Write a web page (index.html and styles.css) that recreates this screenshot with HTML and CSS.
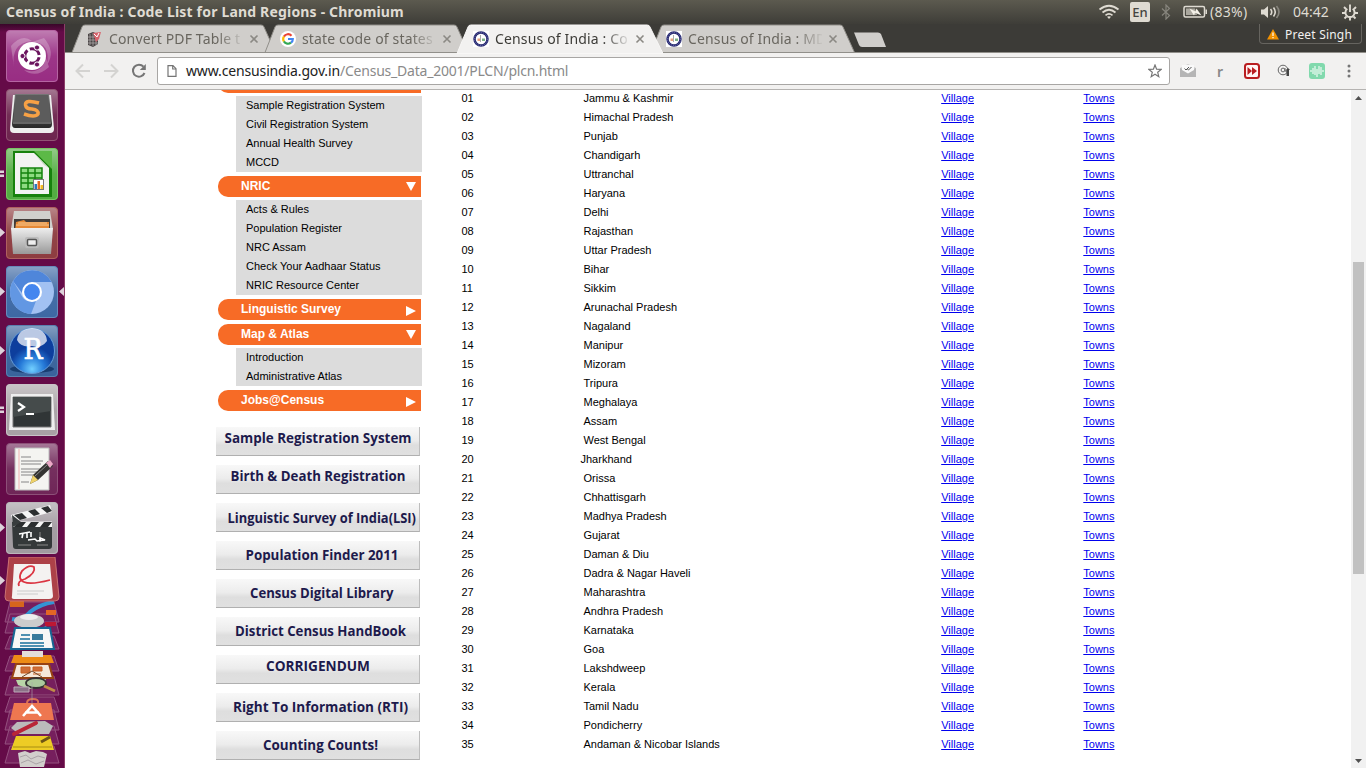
FILE: index.html
```html
<!DOCTYPE html>
<html lang="en">
<head>
<meta charset="utf-8">
<title>Census of India : Code List for Land Regions</title>
<link rel="stylesheet" href="styles.css">
</head>
<body>
<header class="panel">
  <span class="panel-title">Census of India : Code List for Land Regions - Chromium</span>
  <div class="indicators">
    <svg class="ind-wifi" width="22" height="18" viewBox="0 0 22 18" fill="none" stroke="#dfdbd2" stroke-width="1.7"><path d="M1.5 6.5Q11 -1 20.500 6.500M4.500 9.500Q11 4 17.500 9.500M7.500 12.300Q11 9.500 14.500 12.300"/><path d="M9 13.800L11 16L13 13.800Q11 12.600 9 13.800Z" fill="#dfdbd2" stroke="none"/></svg>
    <span class="ind-lang">En</span>
    <svg class="ind-bt" width="10" height="16" viewBox="0 0 10 16" fill="none" stroke="#87857d" stroke-width="1.2"><path d="M1 4.500L8.500 11.500L5 15V1L8.500 4.500L1 11.500"/></svg>
    <svg class="ind-bat" width="25" height="14" viewBox="0 0 25 14"><rect x="1" y="1.500" width="20.500" height="10.500" rx="1.500" fill="none" stroke="#dfdbd2" stroke-width="1.500"/><path d="M3 3.500H12L14 10H3Z" fill="#aaa79e"/><path d="M6.500 3.500L12.500 6.500L13.500 3.500L18.500 10.500L12 7.800L11 10.500Z" fill="#f4f1e8"/><path d="M22.500 4.500H24V9H22.500Z" fill="#dfdbd2"/></svg>
    <span class="ind-pct">(83%)</span>
    <svg class="ind-vol" width="22" height="16" viewBox="0 0 22 16"><path d="M1 5.500H4L8 2V14L4 10.500H1Z" fill="#dfdbd2"/><path d="M10.500 5Q13 8 10.500 11M13.500 3.500Q17 8 13.500 12.500" fill="none" stroke="#dfdbd2" stroke-width="1.600"/><path d="M16.500 2Q21.500 8 16.500 14" fill="none" stroke="#88867e" stroke-width="1.600"/></svg>
    <span class="ind-clock">04:42</span>
    <svg class="ind-gear" width="16" height="17" viewBox="0 0 16 17" fill="none" stroke="#dfdbd2"><path d="M5.300 4.800A4.600 4.600 0 1 0 10.700 4.800" stroke-width="2"/><path d="M8 .5V8M2 3L4 5M14 3L12 5M0 9H3M13 9H16M2.500 14.500L4.500 12.500M13.500 14.500L11.500 12.500M8 13.500V16.500" stroke-width="1.900"/></svg>
  </div>
</header>
<div class="desktop">
  <nav class="launcher">
    <svg class="tile" viewBox="0 0 52 52"><defs><linearGradient id="gloss" x2="0" y2="1"><stop stop-color="#fff" stop-opacity=".42"/><stop offset=".5" stop-color="#fff" stop-opacity=".1"/><stop offset="1" stop-color="#fff" stop-opacity=".06"/></linearGradient><linearGradient id="metal" x2="0" y2="1"><stop stop-color="#eee"/><stop offset="1" stop-color="#999"/></linearGradient><linearGradient id="dark" x2="0" y2="1"><stop stop-color="#767676"/><stop offset="1" stop-color="#292929"/></linearGradient><radialGradient id="blue" cy=".9"><stop stop-color="#72d0ff"/><stop offset=".55" stop-color="#267ad8"/><stop offset="1" stop-color="#0d3e9d"/></radialGradient></defs>
      <rect width="52" height="52" rx="4" fill="#92207b"/><rect x=".5" y=".5" width="51" height="51" rx="3.500" fill="url(#gloss)" stroke="#b565a2"/><path d="M8 38Q4 13 26 11Q16 3 5 16M26 12Q45 12 41 35Q50 22 38 8M40 28Q36 45 18 40Q30 49 43 37" fill="#fff" opacity=".24"/><circle cx="26" cy="26" r="14" fill="#fff"/><g fill="none" stroke="#6b145e" stroke-width="3"><circle cx="26" cy="26" r="7.200" stroke-dasharray="12.500 2.580" stroke-dashoffset="-1.300"/></g><g fill="#6b145e" stroke="#fff"><circle cx="16.500" cy="26" r="2.600"/><circle cx="31" cy="17.500" r="2.600"/><circle cx="31" cy="34.500" r="2.600"/></g></svg>
    <svg class="tile" viewBox="0 0 52 52"><rect width="52" height="52" rx="4" fill="#641743"/><rect x=".5" y=".5" width="51" height="51" rx="3.500" fill="url(#gloss)" stroke="#925475"/><path d="M7 6H45L48 40Q48 44 44 44H8Q4 44 4 40Z" fill="#eee"/><path d="M9 5H43L46 35Q46 39 43 39H9Q6 39 6 35Z" fill="url(#dark)"/><path d="M10 6H42L45 33H7Z" fill="#5c5c5c"/><path d="M7 34H45" stroke="#999"/><path d="M33 14Q19 10 19.500 16Q20 20 26 20Q33 21 32 25Q29 29 18 25" fill="none" stroke="#f7a145" stroke-width="3.500"/></svg>
    <svg class="tile" viewBox="0 0 52 52"><rect width="52" height="52" rx="4" fill="#47a735"/><rect x=".5" y=".5" width="51" height="51" rx="3.500" fill="url(#gloss)" stroke="#79c564"/><path d="M7 3H37L46 13V49H7Z" fill="#17810d"/><path d="M28 3H46V21Z" fill="#5cb947"/><path d="M9 5H28L43 20V46H9Z" fill="#f2f3f2"/><path d="M28 5L43 20L38 17Z" fill="#c6d5c2"/><path d="M15 20H36V41H15Z" fill="#8edb82"/><path d="M15 20H36V41H15ZM15 25H36M15 30H36M15 35H36M22 20V41M29 20V41" fill="none" stroke="#13830d" stroke-width="1.500"/><rect x="27.500" y="31.500" width="10" height="10" fill="#fff" stroke="#777"/><path d="M28.500 36H31V41H28.500Z" fill="#2b79bd"/><path d="M31.500 33H34V41H31.500Z" fill="#e46b22"/><path d="M34.500 37H37V41H34.500Z" fill="#f4bd24"/></svg>
    <svg class="tile" viewBox="0 0 52 52"><rect width="52" height="52" rx="4" fill="#863034"/><rect x=".5" y=".5" width="51" height="51" rx="3.500" fill="url(#gloss)" stroke="#b0605f"/><path d="M8 4H44L47 22H5Z" fill="#d0d0cd"/><path d="M8 12H44V24H8Z" fill="#413c3a"/><path d="M10 15L18 13L20 15H43V24H9Z" fill="#e58835"/><path d="M10 18H43M12 16H41" stroke="#f7cb95"/><path d="M5 21H47L45 47H7Z" fill="url(#metal)"/><rect x="19" y="30" width="14" height="11" rx="2" fill="#bbb"/><rect x="21.500" y="32.500" width="9" height="6" rx="1" fill="#eee" stroke="#555" stroke-width="1.500"/></svg>
    <svg class="tile" viewBox="0 0 52 52"><rect width="52" height="52" rx="4" fill="#315f9e"/><rect x=".5" y=".5" width="51" height="51" rx="3.500" fill="url(#gloss)" stroke="#688bbb"/><circle cx="26" cy="26" r="22" fill="#a2c1f2"/><path d="M7 15A22 22 0 0 1 45.500 16H26L16 27Z" fill="#4f86da"/><path d="M7 15L17 32Q21 37 30 35L25 48A22 22 0 0 1 7 15" fill="#6297e3"/><circle cx="26" cy="26" r="10" fill="#fff"/><circle cx="26" cy="26" r="7.900" fill="#4486ef"/></svg>
    <svg class="tile" viewBox="0 0 52 52"><rect width="52" height="52" rx="4" fill="#2c5995"/><rect x=".5" y=".5" width="51" height="51" rx="3.500" fill="url(#gloss)" stroke="#5a81b0"/><ellipse cx="26" cy="44" rx="22" ry="4" fill="#193d70"/><circle cx="26" cy="26" r="22.500" fill="url(#blue)" stroke="#639bd8"/><path d="M11 15Q12 4 26 3Q40 4 41 16Q35 24 26 21Q15 23 11 15" fill="#fff" opacity=".72"/><text x="17.500" y="34" class="r-letter" textLength="19" lengthAdjust="spacingAndGlyphs">R</text></svg>
    <svg class="tile" viewBox="0 0 52 52"><rect width="52" height="52" rx="4" fill="#a29b9f"/><rect x=".5" y=".5" width="51" height="51" rx="3.500" fill="url(#gloss)" stroke="#c9c3c7"/><path d="M5 10H47L49 46H3Z" fill="#eee"/><path d="M7 13H45V43H7Z" fill="#303536" stroke="#777"/><path d="M7 13H45V27L7 33Z" fill="#454b4b"/><path d="M12 19L18 23L12 27M20 30H28" fill="none" stroke="#fff" stroke-width="2.200"/></svg>
    <svg class="tile" viewBox="0 0 52 52"><rect width="52" height="52" rx="4" fill="#66184d"/><rect x=".5" y=".5" width="51" height="51" rx="3.500" fill="url(#gloss)" stroke="#8d5078"/><path d="M9 5H43V47H9Z" fill="#f4f4f1" stroke="#bbb"/><path d="M15 14H25M15 18H37M15 21H35M15 26H37M15 29H34M15 32H28M15 39H23" stroke="#aaa" stroke-width="1.500"/><path d="M13 6V46" stroke="#f0b3b1"/><path d="M24 41L27 32L42 18L47 23L32 37Z" fill="#343432"/><path d="M24 41L27 32L32 37Z" fill="#efd269"/><path d="M40 20L44 17L47 21L44 25Z" fill="#eba9c7"/><path d="M29 33L42 21" stroke="#888"/></svg>
    <svg class="tile" viewBox="0 0 52 52"><rect width="52" height="52" rx="4" fill="#9b949a"/><rect x=".5" y=".5" width="51" height="51" rx="3.500" fill="url(#gloss)" stroke="#bdb6bb"/><path d="M6 20H46V44Q46 47 43 47H10Q7 47 7 44Z" fill="#343839"/><path d="M5 13L44 3L46 10L7 20Z" fill="#f5f5f5"/><path d="M7 19.500H46V25H7Z" fill="#f5f5f5"/><path d="M8 13L16 11L21 16L14 18ZM22 9L29 7L34 12L28 14ZM35 6L42 4L46 9L41 11ZM12 20H20L16 25H8ZM25 20H33L29 25H21ZM38 20H46L42 25H34Z" fill="#2c2f30"/><path d="M6 13L15 20L7 25Z" fill="#383c3d"/><path d="M12 43H25M31 43H42M34 30V40" stroke="#888"/><path d="M13 32L24 30M17 31L16 36M21 31V36M25 30V35M22 38L29 37L31 39L39 38L34 36V40" fill="none" stroke="#fff" stroke-width="1.600"/></svg>
    <svg class="stack" viewBox="0 0 65 211">
      <g transform="translate(0 -5)">
      <g fill="#8b3777" fill-opacity=".45" stroke="#94507f"><path d="M10 50H54L59 70H5ZM10 62H54L59 81H5ZM10 84H54L59 97H5ZM10 104H54L59 119H5ZM10 124H54L59 143H5ZM10 145H54L59 160H5ZM10 158H54L59 178H5ZM10 174H54L59 192H5ZM10 194H54L59 211H5Z"/></g>
      <path d="M12 67Q22 69 30 60Q40 52 54 50" fill="none" stroke="#3494d3" stroke-width="4"/><path d="M10 49H24V55H10Z" fill="#d6651c"/><path d="M46 58H56V63H46Z" fill="#e46624"/><path d="M45 70H56V74H45Z" fill="#bd1834"/><ellipse cx="29" cy="69" rx="15" ry="7" fill="#ccc"/><ellipse cx="29" cy="65" rx="9" ry="3" fill="#eee"/><path d="M35 78L46 74L49 79Z" fill="#4882ae"/>
      <path d="M15 76H50L54 97H11Z" fill="#f7f7f6" stroke="#176693" stroke-width="2"/><path d="M21 83H30M20 87H30M20 91H44M20 94H44" stroke="#17709c" stroke-width="1.500"/><path d="M32 82H43V88H32Z" fill="#397b9c"/>
      <path d="M14 103H51L54 111H11Z" fill="#ed8b16"/><path d="M22 99H43V105H22Z" fill="#e3dfd9"/><path d="M16 112H49L53 126H12Z" fill="#f5e8da" stroke="#984212" stroke-width="2"/><path d="M21 115H30V121H21ZM33 115H42V119H33ZM33 122H41" fill="#cf6d37" stroke="#c86023"/><path d="M22 125L32 119L42 125" fill="none" stroke="#70482e"/>
      <path d="M16 128L46 127L44 134L29 137L18 133Z" fill="#b9d6a8"/><ellipse cx="36" cy="131" rx="10" ry="5" fill="#a7c59a" fill-opacity=".8" stroke="#333" stroke-width="1.800"/><path d="M44 134L55 139" stroke="#c08c48" stroke-width="3"/><path d="M14 135H29V140H14Z" fill="#8c7288" stroke="#bba9b7"/>
      <path d="M14 151H51L54 168H10Z" fill="#ee7750"/><path d="M27 151Q27 147 33 147Q39 147 38 151" fill="none" stroke="#d87054" stroke-width="2"/><path d="M23 164L32 154L41 164M25 160.500H39" fill="none" stroke="#fff" stroke-width="2.600"/><path d="M32 130V152" stroke="#aaa" opacity=".6"/>
      <path d="M17 170L45 169L53 174L49 182H19L11 176Z" fill="#bbb"/><path d="M14 182L36 171" stroke="#b92638" stroke-width="4" stroke-linecap="round"/><path d="M16 184H50L54 198H11Z" fill="#edcc25"/><path d="M13 195H52" stroke="#a88e12"/><path d="M41 190L50 185" stroke="#6d5515" stroke-width="3"/><path d="M18 201L25 199L30 201L36 199L43 200L47 202L44 215H20Z" fill="#d2cfcc"/><path d="M20 205L26 203L31 207L38 204L45 206M21 211L28 208L36 212L44 209" fill="none" stroke="#aaa3a7"/>
      </g>
      <path d="M9 0H55L59 40Q59 44 55 44H9Q5 44 5 40Z" fill="#ad4148" stroke="#cb7374"/><path d="M14 3H50L53 35Q53 38 49 38H14Q11 38 12 35Z" fill="#f4f2f1" transform="translate(0 4)"/><path d="M17 34H44M17 37H38" stroke="#ccc"/><path d="M19 29Q17 24 25 22Q36 16 34 10Q29 7 22 14Q17 22 24 25Q31 28 50 23" fill="none" stroke="#db3542" stroke-width="1.800"/>
    </svg>
    <svg class="markers" width="65" height="744" viewBox="0 24 65 744" fill="#ddd2da"><path d="M0 170.500H4V173H0ZM0 174.500H4V177H0ZM0 406.500H4V409H0ZM0 410.500H4V413H0ZM0 228L5 232.500L0 237ZM0 287L5 291.500L0 296ZM0 346L5 350.500L0 355ZM0 523L5 527.500L0 532ZM0 576L5 580.500L0 585ZM64 287L59 291.500L64 296Z"/></svg>
  </nav>
  <main class="browser">
    <div class="tabstrip">
      <div class="tab"><svg class="tab-shape" width="206" height="29"><path d="M0 28.500L10 3Q10.500 1 13 1H189Q191.500 1 192 3L203.500 28.500Z" fill="#d0cecb" stroke="#918f8a"/></svg>
        <svg class="favicon" viewBox="0 0 16 16"><path d="M1 3L6 1L11 3V13L6 16L1 14Z" fill="#4a4545"/><path d="M3 3V14M6 2V15M9 3V14M1 6H11M1 9H11M1 12H11" stroke="#b6afaf" stroke-width=".7"/><path d="M6 2L14 1L12 8L9 11Z" fill="#d6636c"/><path d="M7 3L10 6L12 2" fill="none" stroke="#fff"/></svg>
        <span class="tab-title">Convert PDF Table t</span><svg class="close" viewBox="0 0 8 8"><path d="M.5 .5L7.500 7.500M7.500 .5L.5 7.500"/></svg></div>
      <div class="tab"><svg class="tab-shape" width="206" height="29"><path d="M0 28.500L10 3Q10.500 1 13 1H189Q191.500 1 192 3L203.500 28.500Z" fill="#d0cecb" stroke="#918f8a"/></svg>
        <svg class="favicon" viewBox="0 0 16 16"><circle cx="8" cy="8" r="8" fill="#fff"/><g fill="none" stroke-width="2.200"><path d="M3.900 5.600A4.800 4.800 0 0 1 11.500 4.700" stroke="#ea4335"/><path d="M3.900 5.500A4.800 4.800 0 0 0 3.900 10.500" stroke="#fbbc05"/><path d="M3.900 10.400A4.800 4.800 0 0 0 11 11.700" stroke="#34a853"/><path d="M8 8H12.800Q12.800 10.500 11 11.700" stroke="#4285f4"/></g></svg>
        <span class="tab-title">state code of states</span><svg class="close" viewBox="0 0 8 8"><path d="M.5 .5L7.500 7.500M7.500 .5L.5 7.500"/></svg></div>
      <div class="tab tab-active"><svg class="tab-shape" width="206" height="29"><path d="M-1 29.500L10 3Q10.500 1 13 1H189Q191.500 1 192 3L205 29.500Z" fill="#f2f1f0" stroke="#f8f7f6"/></svg>
        <svg class="favicon" viewBox="0 0 16 16"><path d="M0 0H16V16H0Z" fill="#fff"/><circle cx="8" cy="8" r="6.500" fill="#fff" stroke="#292b72" stroke-width="2.500"/><circle cx="8" cy="8" r="6.500" fill="none" stroke="#8588bd" stroke-width=".7" stroke-dasharray="1 1"/><path d="M4.500 7.500H7V10H4.500Z" fill="#e9a17d"/><path d="M9 7.500H12V10H9Z" fill="#7cb287"/><path d="M7.500 4V11" stroke="#aaa"/></svg>
        <span class="tab-title">Census of India : Co</span><svg class="close" viewBox="0 0 8 8"><path d="M.5 .5L7.500 7.500M7.500 .5L.5 7.500"/></svg></div>
      <div class="tab"><svg class="tab-shape" width="206" height="29"><path d="M0 28.500L10 3Q10.500 1 13 1H189Q191.500 1 192 3L203.500 28.500Z" fill="#d0cecb" stroke="#918f8a"/></svg>
        <svg class="favicon" viewBox="0 0 16 16"><path d="M0 0H16V16H0Z" fill="#fff"/><circle cx="8" cy="8" r="6.500" fill="#fff" stroke="#292b72" stroke-width="2.500"/><circle cx="8" cy="8" r="6.500" fill="none" stroke="#8588bd" stroke-width=".7" stroke-dasharray="1 1"/><path d="M4.500 7.500H7V10H4.500Z" fill="#e9a17d"/><path d="M9 7.500H12V10H9Z" fill="#7cb287"/><path d="M7.500 4V11" stroke="#aaa"/></svg>
        <span class="tab-title">Census of India : MD</span><svg class="close" viewBox="0 0 8 8"><path d="M.5 .5L7.500 7.500M7.500 .5L.5 7.500"/></svg></div>
      <svg class="newtab" width="34" height="16" viewBox="0 0 34 16"><path d="M1 .5H25Q27 .5 28 2L33 15H9Q7 15 6 13Z" fill="#d0cecb"/></svg>
      <div class="profile"><svg width="12" height="11" viewBox="0 0 12 11"><path d="M6 0L12 10.500H0Z" fill="#f29100"/><path d="M6 3.500V7M6 8V9.300" stroke="#fff" stroke-width="1.200"/></svg><span>Preet Singh</span></div>
    </div>
    <div class="toolbar">
      <svg class="nav-icon" viewBox="0 0 16 16"><path d="M15 8H2M8 1.500L1.500 8L8 14.500" stroke="#d4d3d1"/></svg>
      <svg class="nav-icon" viewBox="0 0 16 16"><path d="M1 8H14M8 1.500L14.500 8L8 14.500" stroke="#d4d3d1"/></svg>
      <svg class="nav-icon" viewBox="0 0 16 16"><path d="M13.500 10A6 6 0 1 1 12.500 3.700" stroke="#757575"/><path d="M14.800 1V7H8.800Z" fill="#757575" stroke="none"/></svg>
      <div class="omnibox">
        <svg width="10" height="12" viewBox="0 0 10 12" fill="none" stroke="#757575" stroke-width="1.200"><path d="M1 .7H6L9 3.700V11.300H1ZM5.700 .7V4H9"/></svg>
        <span class="url"><b>www.censusindia.gov.in</b>/Census_Data_2001/PLCN/plcn.html</span>
        <svg width="14" height="14" viewBox="0 0 14 14" fill="none" stroke="#757575" stroke-width="1.200"><path d="M7 1L8.600 5.100L13.200 5.400L9.700 8.300L10.800 12.700L7 10.300L3.200 12.700L4.300 8.300L.8 5.400L5.400 5.100Z"/></svg>
      </div>
      <div class="extensions">
        <svg width="16" height="14" viewBox="0 0 16 14"><path d="M0 4L8 0L16 4V13H0Z" fill="#ccc"/><path d="M0 4L8 9L16 4V13H0Z" fill="#b5b5b5"/><path d="M2 1H14V6L8 9.500L2 6Z" fill="#f9f9f9"/><path d="M4.500 4.500L6 6L9 3M7.500 5.500L8.500 6L11.500 3" fill="none" stroke="#555"/></svg>
        <span class="ext-r">r</span>
        <svg width="16" height="16" viewBox="0 0 16 16"><rect x="1" y="1" width="14" height="14" rx="2.500" fill="#fff5f5" stroke="#b91d20" stroke-width="2"/><path d="M3.500 4L8 8L3.500 12ZM8 4L13 8L8 12Z" fill="#b91d20"/></svg>
        <svg width="15" height="14" viewBox="0 0 15 14" fill="none" stroke="#666"><circle cx="6" cy="6" r="4.800"/><circle cx="6" cy="6" r="1.900"/><path d="M8 4V7Q10 8.500 10.500 5"/><path d="M9 6L11 4L13 6H12V12H9.500V6Z" fill="#444" stroke="none"/></svg>
        <svg width="16" height="16" viewBox="0 0 16 16"><rect width="16" height="16" rx="3" fill="#81d9ad"/><path d="M2 7V9M4 5V11M6 3V12M8 6V14M10 3V11M12 4V12M14 7V9" stroke="#effaf4" stroke-width="1.200"/></svg>
        <svg width="4" height="14" viewBox="0 0 4 14" fill="#757575"><circle cx="2" cy="2" r="1.500"/><circle cx="2" cy="7" r="1.500"/><circle cx="2" cy="12" r="1.500"/></svg>
      </div>
    </div>
    <div class="viewport">
      <div class="page">
        <aside class="sidebar">
          <div class="bar bar-clipped"></div>
          <ul class="submenu"><li>Sample Registration System</li><li>Civil Registration System</li><li>Annual Health Survey</li><li>MCCD</li></ul>
          <div class="bar">NRIC<i class="arrow-down"></i></div>
          <ul class="submenu"><li>Acts &amp; Rules</li><li>Population Register</li><li>NRC Assam</li><li>Check Your Aadhaar Status</li><li>NRIC Resource Center</li></ul>
          <div class="bar">Linguistic Survey<i class="arrow-right"></i></div>
          <div class="bar">Map &amp; Atlas<i class="arrow-down"></i></div>
          <ul class="submenu"><li>Introduction</li><li>Administrative Atlas</li></ul>
          <div class="bar">Jobs@Census<i class="arrow-right"></i></div>
          <div class="banners">
            <svg class="banner"><text x="8.500" y="16" textLength="187" lengthAdjust="spacingAndGlyphs">Sample Registration System</text></svg>
            <svg class="banner"><text x="14.500" y="16" textLength="175" lengthAdjust="spacingAndGlyphs">Birth &amp; Death Registration</text></svg>
            <svg class="banner"><text x="11.500" y="20" textLength="188.500" lengthAdjust="spacingAndGlyphs">Linguistic Survey of India(LSI)</text></svg>
            <svg class="banner"><text x="29.500" y="19" textLength="153" lengthAdjust="spacingAndGlyphs">Population Finder 2011</text></svg>
            <svg class="banner"><text x="34" y="19" textLength="143.500" lengthAdjust="spacingAndGlyphs">Census Digital Library</text></svg>
            <svg class="banner"><text x="19" y="19" textLength="171" lengthAdjust="spacingAndGlyphs">District Census HandBook</text></svg>
            <svg class="banner"><text x="50" y="16" textLength="104" lengthAdjust="spacingAndGlyphs">CORRIGENDUM</text></svg>
            <svg class="banner"><text x="17" y="19" textLength="175" lengthAdjust="spacingAndGlyphs">Right To Information (RTI)</text></svg>
            <svg class="banner"><text x="47" y="19" textLength="115" lengthAdjust="spacingAndGlyphs">Counting Counts!</text></svg>
          </div>
        </aside>
        <table class="codes">
          <tr><td>01<td>Jammu &amp; Kashmir<td><a href="#">Village</a><td><a href="#">Towns</a>
          <tr><td>02<td>Himachal Pradesh<td><a href="#">Village</a><td><a href="#">Towns</a>
          <tr><td>03<td>Punjab<td><a href="#">Village</a><td><a href="#">Towns</a>
          <tr><td>04<td>Chandigarh<td><a href="#">Village</a><td><a href="#">Towns</a>
          <tr><td>05<td>Uttranchal<td><a href="#">Village</a><td><a href="#">Towns</a>
          <tr><td>06<td>Haryana<td><a href="#">Village</a><td><a href="#">Towns</a>
          <tr><td>07<td>Delhi<td><a href="#">Village</a><td><a href="#">Towns</a>
          <tr><td>08<td>Rajasthan<td><a href="#">Village</a><td><a href="#">Towns</a>
          <tr><td>09<td>Uttar Pradesh<td><a href="#">Village</a><td><a href="#">Towns</a>
          <tr><td>10<td>Bihar<td><a href="#">Village</a><td><a href="#">Towns</a>
          <tr><td>11<td>Sikkim<td><a href="#">Village</a><td><a href="#">Towns</a>
          <tr><td>12<td>Arunachal Pradesh<td><a href="#">Village</a><td><a href="#">Towns</a>
          <tr><td>13<td>Nagaland<td><a href="#">Village</a><td><a href="#">Towns</a>
          <tr><td>14<td>Manipur<td><a href="#">Village</a><td><a href="#">Towns</a>
          <tr><td>15<td>Mizoram<td><a href="#">Village</a><td><a href="#">Towns</a>
          <tr><td>16<td>Tripura<td><a href="#">Village</a><td><a href="#">Towns</a>
          <tr><td>17<td>Meghalaya<td><a href="#">Village</a><td><a href="#">Towns</a>
          <tr><td>18<td>Assam<td><a href="#">Village</a><td><a href="#">Towns</a>
          <tr><td>19<td>West Bengal<td><a href="#">Village</a><td><a href="#">Towns</a>
          <tr><td>20<td class="outdent">Jharkhand<td><a href="#">Village</a><td><a href="#">Towns</a>
          <tr><td>21<td>Orissa<td><a href="#">Village</a><td><a href="#">Towns</a>
          <tr><td>22<td>Chhattisgarh<td><a href="#">Village</a><td><a href="#">Towns</a>
          <tr><td>23<td>Madhya Pradesh<td><a href="#">Village</a><td><a href="#">Towns</a>
          <tr><td>24<td>Gujarat<td><a href="#">Village</a><td><a href="#">Towns</a>
          <tr><td>25<td>Daman &amp; Diu<td><a href="#">Village</a><td><a href="#">Towns</a>
          <tr><td>26<td>Dadra &amp; Nagar Haveli<td><a href="#">Village</a><td><a href="#">Towns</a>
          <tr><td>27<td>Maharashtra<td><a href="#">Village</a><td><a href="#">Towns</a>
          <tr><td>28<td>Andhra Pradesh<td><a href="#">Village</a><td><a href="#">Towns</a>
          <tr><td>29<td>Karnataka<td><a href="#">Village</a><td><a href="#">Towns</a>
          <tr><td>30<td>Goa<td><a href="#">Village</a><td><a href="#">Towns</a>
          <tr><td>31<td>Lakshdweep<td><a href="#">Village</a><td><a href="#">Towns</a>
          <tr><td>32<td>Kerala<td><a href="#">Village</a><td><a href="#">Towns</a>
          <tr><td>33<td>Tamil Nadu<td><a href="#">Village</a><td><a href="#">Towns</a>
          <tr><td>34<td>Pondicherry<td><a href="#">Village</a><td><a href="#">Towns</a>
          <tr><td>35<td>Andaman &amp; Nicobar Islands<td><a href="#">Village</a><td><a href="#">Towns</a>
        </table>
      </div>
      <div class="scrollbar"><svg width="7" height="4"><path d="M3.500 0L7 4H0Z"/></svg><div class="thumb"></div><svg width="7" height="4"><path d="M0 0H7L3.500 4Z"/></svg></div>
    </div>
  </main>
</div>
</body>
</html>
```
FILE: styles.css
```css
* { box-sizing: border-box; }
body { margin: 0; width: 1366px; height: 768px; overflow: hidden; display: flex; flex-direction: column; background: #fff; font-family: "Noto Sans", "Open Sans", sans-serif; }
svg { display: block; flex: none; }

.panel { height: 24px; flex: none; display: flex; align-items: center; justify-content: space-between; padding: 0 8px 0 6px; background: linear-gradient(#5c5a4f, #3e3d38); color: #dfdbd2; white-space: nowrap; }
.panel-title { font-size: 14px; font-weight: 700; line-height: 24px; letter-spacing: .18px; }
.indicators { display: flex; align-items: center; font-size: 14px; line-height: 24px; }
.ind-wifi { margin-right: -1px; }
.ind-lang { width: 20px; height: 20px; margin: 0 11px; border-radius: 2px; background: #dfdbd2; color: #45443f; font-size: 13px; font-weight: 500; line-height: 20px; text-align: center; }
.ind-bat { margin: 0 2px 0 12px; }
.ind-pct { width: 40px; letter-spacing: .3px; }
.ind-vol { margin: 0 11px 0 10px; }
.ind-clock { width: 37px; letter-spacing: 0; }
.ind-gear { margin-left: 12px; }

.desktop { display: flex; height: 744px; }
.launcher { position: relative; width: 65px; flex: none; display: flex; flex-direction: column; align-items: flex-start; gap: 7px; padding-top: 6px; background: linear-gradient(#390629, #650b48 8px); border-right: 1px solid #8c3e69; overflow: hidden; }
.tile { width: 52px; height: 52px; margin-left: 6px; }
.stack { width: 65px; height: 211px; margin-top: -4px; }
.markers { position: absolute; left: 0; top: 0; }
.r-letter { font: 400 27px "DejaVu Serif", serif; fill: #fff; stroke: #fff; stroke-width: .7px; }

.browser { width: 1301px; display: flex; flex-direction: column; }
.tabstrip { height: 29px; flex: none; display: flex; padding-left: 7px; background: #3c3b37; border-bottom: 1px solid #918f8a; }
.tab { position: relative; width: 193px; height: 29px; flex: none; display: flex; align-items: center; padding-left: 15px; color: #69665f; }
.tab-active { z-index: 1; color: #3c3b37; }
.tab-shape { position: absolute; left: 0; top: 0; overflow: visible; }
.favicon { position: relative; width: 16px; height: 16px; margin-right: 6px; }
.tab-title { position: relative; width: 134px; white-space: nowrap; font-size: 14px; line-height: 28px; letter-spacing: .15px; -webkit-mask-image: linear-gradient(90deg, #000 108px, transparent 136px); mask-image: linear-gradient(90deg, #000 108px, transparent 136px); }
.close { position: relative; width: 8px; height: 8px; margin-left: 7px; overflow: visible; stroke: #8b8984; stroke-width: 1.600; }
.newtab { margin: 8px 0 0 9px; }
.profile { width: 103px; height: 20px; margin-left: auto; margin-right: 4px; display: flex; align-items: center; gap: 6px; padding: 2px 0 0 7px; border: 1px solid #66645f; border-top: 0; border-radius: 0 0 4px 4px; color: #f2f1f0; font-size: 12px; line-height: 18px; letter-spacing: .2px; white-space: nowrap; }

.toolbar { height: 37px; flex: none; display: flex; align-items: center; gap: 12px; padding-left: 10px; background: #f2f1f0; border-bottom: 1px solid #b5b3b1; }
.nav-icon { width: 16px; height: 16px; fill: none; stroke-width: 2; }
.omnibox { width: 1013px; height: 28px; margin-left: -2px; display: flex; align-items: center; padding: 0 7px 0 9px; background: #fff; border: 1px solid #a8a6a4; border-radius: 3px; }
.url { margin-left: 9px; flex: 1; font-size: 14px; line-height: 26px; color: #8a8a8a; letter-spacing: -.22px; white-space: nowrap; }
.url b { font-weight: 400; color: #222; letter-spacing: -.14px; }
.extensions { display: flex; align-items: center; margin-left: -2px; }
.ext-r { width: 8px; margin: 0 19px 0 21px; font-size: 14px; font-weight: 600; color: #888; }
.extensions svg + svg { margin-left: 17px; }
.extensions svg:last-child { margin-left: 22px; }

.viewport { height: 678px; display: flex; overflow: hidden; font-family: "Liberation Sans", Arial, sans-serif; font-size: 11px; color: #000; }
.page { width: 1286px; display: flex; align-items: flex-start; overflow: hidden; }
.sidebar { width: 206px; margin-left: 151px; flex: none; }
.bar { width: 203px; height: 21px; margin: 4px 0 0 2px; padding: 0 5px 0 23px; display: flex; align-items: center; justify-content: space-between; background: #f76b26; border-radius: 10px 0 0 10px; color: #fff; font-size: 12px; font-weight: 700; line-height: 21px; }
.bar-clipped { margin-top: -18px; }
.arrow-down { border: 5px solid transparent; border-top: 9px solid #fff; border-bottom: 0; }
.arrow-right { margin-top: 2px; border: 5px solid transparent; border-left: 10px solid #fff; border-right: 0; }
.submenu { width: 186px; margin: 3px 0 0 20px; padding: 0; list-style: none; background: #dcdcdc; }
.submenu li { height: 19px; padding-left: 10px; line-height: 19px; }
.banners { display: grid; gap: 9px; margin-top: 16px; }
.banner { width: 204px; height: 29px; background: linear-gradient(#f8f8f8, #ececec 48%, #dedede 65%, #e0e0e0); border-right: 1px solid #bdbdbd; border-bottom: 1px solid #b0b0b0; font: 700 14px "Open Sans", sans-serif; fill: #1d1a4c; }

.codes { width: 740px; margin: -1px 0 0 39px; table-layout: fixed; border-collapse: collapse; }
.codes td { height: 19px; padding: 0; line-height: 19px; }
.codes td:nth-child(1) { width: 122px; padding-left: .5px; }
.codes td:nth-child(2) { width: 358px; padding-left: .5px; }
.codes td:nth-child(3) { width: 142px; padding-left: .2px; }
.codes td:nth-child(4) { padding-left: .3px; }
.codes .outdent { position: relative; left: -3px; }
.codes a { color: #00e; }

.scrollbar { width: 15px; flex: none; display: flex; flex-direction: column; align-items: center; justify-content: space-between; padding: 6px 0 5px; background: #f1f1f1; fill: #505050; }
.thumb { width: 11px; height: 312px; margin-bottom: 23px; background: #c1c1c1; }
```
